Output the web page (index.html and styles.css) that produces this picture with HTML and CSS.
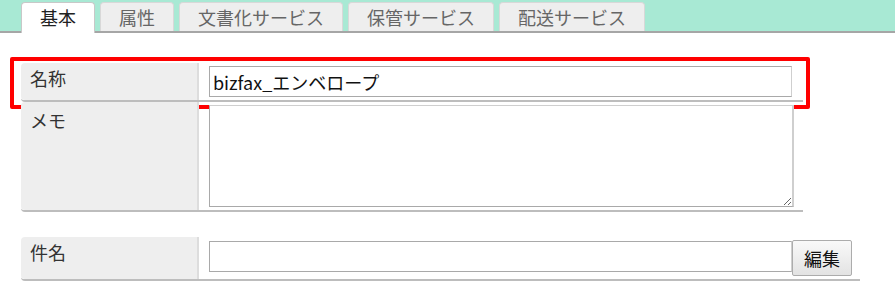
FILE: index.html
```html
<!DOCTYPE html>
<html>
<head>
  <title>基本</title>
  <link rel="stylesheet" href="styles.css">
</head>
<body>
  <div class="tab-bar">
    <ul class="tabs">
      <li class="tab active">基本</li>
      <li class="tab">属性</li>
      <li class="tab">文書化サービス</li>
      <li class="tab">保管サービス</li>
      <li class="tab">配送サービス</li>
    </ul>
  </div>

  <div class="content">
    <div class="form-block block-main">
      <div class="row">
        <div class="label">名称</div>
        <div class="value">
          <input type="text" class="text-input" value="bizfax_エンベロープ">
        </div>
        <div class="highlight"></div>
      </div>
      <div class="row">
        <div class="label label-memo">メモ</div>
        <div class="value">
          <textarea class="memo"></textarea>
        </div>
      </div>
    </div>

    <div class="form-block block-subject">
      <div class="row">
        <div class="label">件名</div>
        <div class="value value-inline">
          <input type="text" class="text-input subject-input">
          <button type="button" class="edit-btn">編集</button>
        </div>
      </div>
    </div>
  </div>
</body>
</html>
```

FILE: styles.css
```css
/* base */
body {
  margin: 0;
  font-family: "Noto Sans CJK JP", sans-serif;
  font-size: 18px;
  color: #333;
  background: #fff;
}

/* tabs */
.tab-bar {
  height: 31px;
  background-color: #a8e9d4;
  border-bottom: 2px solid #a6a6a6;
}

.tabs {
  list-style: none;
  margin: 0;
  padding: 2px 0 0 21px;
  display: flex;
  gap: 5px;
}

.tab {
  height: 28px;
  line-height: 28px;
  padding: 0 18px;
  font-size: 18px;
  color: #666;
  background-color: #eeeeee;
  border: 1px solid #d8d8d8;
  border-bottom: none;
  border-radius: 4px 4px 0 0;
}

.tab.active {
  height: 30px;
  margin-bottom: -2px;
  color: #222;
  background-color: #fff;
  border-color: #c8c8c8;
}

/* form rows */
.content {
  padding: 30px 0 0 21px;
}

.form-block {
  display: flex;
  flex-direction: column;
}

.block-main {
  width: 782px;
}

.block-subject {
  width: 839px;
  margin-top: 25px;
}

.row {
  position: relative;
  display: flex;
  border-bottom: 2px solid #bdbdbd;
  border-radius: 4px 0 0 4px;
}

.label {
  width: 167px;
  flex: none;
  padding: 2px 0 0 9px;
  line-height: 27px;
  background-color: #eeeeee;
  border-right: 2px solid #dddddd;
  border-radius: 4px 0 0 4px;
}

.label-memo {
  padding-top: 5px;
}

.value {
  flex: 1;
  padding: 3px 11px 3px 10px;
}

.value-inline {
  display: flex;
  align-items: flex-start;
  padding-right: 8px;
}

.text-input {
  box-sizing: border-box;
  display: block;
  width: 583px;
  height: 31px;
  margin: 0;
  padding: 0 3px;
  font-family: inherit;
  font-size: 18px;
  color: #111;
  border: 1px solid #a9a9a9;
  border-right-color: #cfcfcf;
}

.subject-input {
  margin-top: 1px;
}

.memo {
  box-sizing: border-box;
  display: block;
  width: 585px;
  height: 102px;
  margin: 0;
  font-family: inherit;
  font-size: 18px;
  border: 1px solid #a9a9a9;
  border-right: 2px solid #cfcfcf;
  border-top-color: #cfcfcf;
}

.edit-btn {
  box-sizing: border-box;
  width: 60px;
  height: 36px;
  margin: 0;
  padding: 0;
  font-family: inherit;
  font-size: 18px;
  color: #111;
  background: linear-gradient(#f9f9f9, #e3e3e3);
  border: 1px solid #acacac;
  border-radius: 2px;
}

/* red annotation box around the name row */
.highlight {
  position: absolute;
  left: -11px;
  top: -6px;
  width: 792px;
  height: 44px;
  border: 4px solid #ff0000;
  border-radius: 2px;
  pointer-events: none;
}
```
